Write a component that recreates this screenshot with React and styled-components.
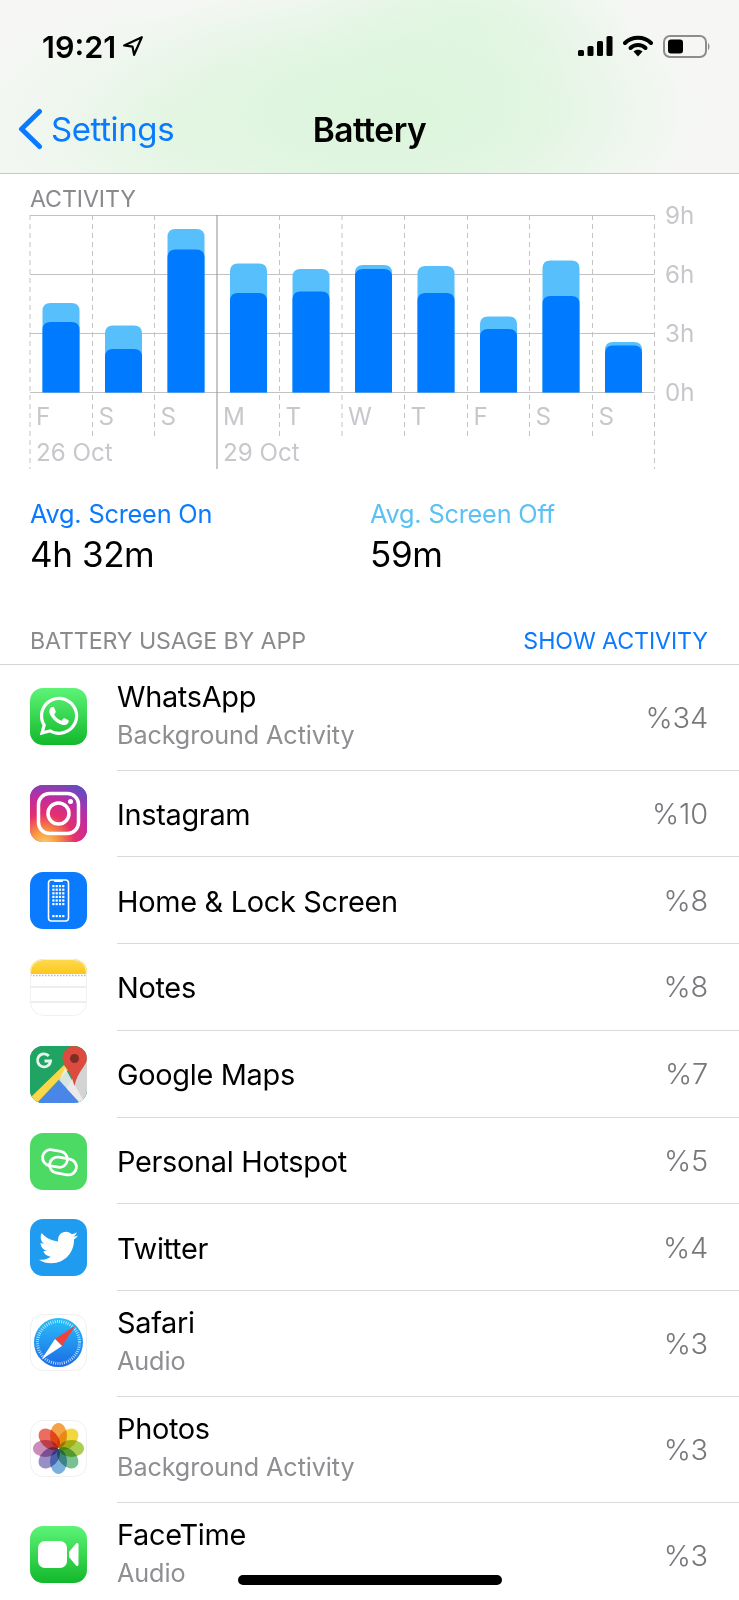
import React from "react";
import styled, { createGlobalStyle } from "styled-components";
import { FaWhatsapp, FaTwitter } from "react-icons/fa";

const Global = createGlobalStyle`
  html, body { margin: 0; padding: 0; background: #fff; }
  body { font-family: Inter, "Liberation Sans", sans-serif; -webkit-font-smoothing: antialiased; }
`;

const Page = styled.div`
  position: relative;
  width: 739px;
  height: 1600px;
  overflow: hidden;
  background: #fff;
  color: #000;
`;

const Header = styled.header`
  box-sizing: border-box;
  height: 174px;
  border-bottom: 1px solid #c9c9c9;
  background:
    radial-gradient(ellipse 300px 150px at 400px 110px, #dcf5dc 0%, rgba(222,245,222,0.85) 45%, rgba(240,248,240,0) 100%),
    radial-gradient(ellipse 220px 130px at 180px 130px, #e4f6e3 0%, rgba(230,246,230,0) 100%),
    radial-gradient(ellipse 160px 80px at 470px 20px, #e3f6e3 0%, rgba(230,246,230,0) 100%),
    #f6f7f5;
  display: flex;
  flex-direction: column;
`;

const StatusBar = styled.div`
  height: 92px;
  box-sizing: border-box;
  padding: 30px 28px 0 42px;
  display: flex;
  justify-content: space-between;
  align-items: flex-start;
`;

const TimeGroup = styled.div`
  display: flex;
  align-items: center;
  gap: 6px;
  height: 32px;
`;

const Time = styled.span`
  font-size: 30.5px;
  font-weight: 600;
  letter-spacing: 0;
`;

const StatusIcons = styled.div`
  display: flex;
  align-items: center;
  height: 32px;
  gap: 10px;
`;

const NavBar = styled.nav`
  position: relative;
  flex: 1;
  display: flex;
  align-items: center;
  justify-content: center;
  padding-bottom: 6px;
`;

const Back = styled.div`
  position: absolute;
  left: 17px;
  top: 16px;
  display: flex;
  align-items: center;
  gap: 8px;
  color: #0a7aff;
  font-size: 33px;
  letter-spacing: -0.4px;
`;

const Title = styled.div`
  font-size: 33.5px;
  font-weight: 600;
  letter-spacing: -0.5px;
`;

const SectionLabel = styled.div`
  font-size: 23.2px;
  line-height: 26px;
  color: #8a8a8e;
  letter-spacing: -0.1px;
`;

const ActivityHead = styled(SectionLabel)`
  padding: 12px 0 0 30px;
  height: 22px;
`;

const ChartSvg = styled.svg`
  display: block;
  width: 739px;
  height: 268px;
  overflow: visible;
`;

const ChartText = styled.text`
  font-family: Inter, "Liberation Sans", sans-serif;
  font-size: 24.2px;
  fill: #c7c7cc;
`;

const Stats = styled.div`
  display: grid;
  grid-template-columns: 340px 1fr;
  padding: 22px 0 0 30px;
  height: 130px;
  box-sizing: content-box;
`;

const StatLabel = styled.div`
  font-size: 25.3px;
  line-height: 32px;
  color: ${(p) => p.$color};
  letter-spacing: -0.2px;
`;

const StatValue = styled.div`
  font-size: 35px;
  line-height: 48px;
  letter-spacing: -0.4px;
`;

const UsageHead = styled.div`
  box-sizing: border-box;
  height: 36.5px;
  padding: 0 31px 0 30px;
  display: flex;
  justify-content: space-between;
  align-items: flex-start;
  border-bottom: 1px solid #d4d4d4;
`;

const ShowActivity = styled(SectionLabel)`
  color: #0a7aff;
`;

const Row = styled.div`
  box-sizing: border-box;
  height: ${(p) => p.$h}px;
  padding-left: 30px;
  display: flex;
  align-items: center;
  gap: 30px;
`;

const RowBody = styled.div`
  box-sizing: border-box;
  flex: 1;
  height: 100%;
  display: flex;
  align-items: center;
  justify-content: space-between;
  padding-right: 31px;
  border-bottom: 1px solid #d9d9d9;
`;

const RowText = styled.div`
  padding: ${(p) => (p.$twoLine ? "0 0 3px" : "3px 0 0")};
`;

const RowName = styled.div`
  font-size: 28.9px;
  line-height: 38px;
  letter-spacing: -0.3px;
`;

const RowSub = styled.div`
  font-size: 25.2px;
  line-height: 38px;
  color: #8e8e93;
  letter-spacing: -0.1px;
`;

const Percent = styled.div`
  font-size: 29px;
  font-weight: 300;
  color: #77777c;
  letter-spacing: -0.2px;
`;

const Tile = styled.div`
  box-sizing: border-box;
  flex: none;
  width: 57px;
  height: 57px;
  margin-bottom: ${(p) => (p.$lifted ? 3 : 0)}px;
  border-radius: 13px;
  overflow: hidden;
  display: flex;
  align-items: center;
  justify-content: center;
  color: #fff;
  background: ${(p) => p.$bg};
  border: ${(p) => (p.$outlined ? "1px solid #f0f0f0" : "none")};
`;

const HomeIndicator = styled.div`
  position: absolute;
  left: 238px;
  top: 1575px;
  width: 264px;
  height: 10px;
  border-radius: 5px;
  background: #000;
`;

/* status bar drawings */
const LocationIcon = () => (
  <svg width="22" height="22" viewBox="0 0 20 20">
    <path d="M18 2 L2 9.5 L9.5 10.5 L11 18 Z" fill="none" stroke="#000" strokeWidth="2" strokeLinejoin="round" />
  </svg>
);
const Signal = () => (
  <svg width="35" height="22" viewBox="0 0 35 22">
    <rect x="0" y="15" width="6" height="6" rx="1.5" />
    <rect x="9.5" y="11" width="6" height="10" rx="1.5" />
    <rect x="19" y="6" width="6" height="15" rx="1.5" />
    <rect x="28.5" y="1" width="6" height="20" rx="1.5" />
  </svg>
);
const Wifi = () => (
  <svg width="30" height="22" viewBox="0 0 30 22">
    <path d="M2 8 C9 1 21 1 28 8" fill="none" stroke="#000" strokeWidth="4" strokeLinecap="round" />
    <path d="M7.5 13 C11.5 9 18.500 9 22.500 13" fill="none" stroke="#000" strokeWidth="4" strokeLinecap="round" />
    <path d="M10.500 16.500 C13 14 17 14 19.500 16.500 L15 21.500 Z" />
  </svg>
);
const BatteryIcon = () => (
  <svg width="48" height="23" viewBox="0 0 48 23">
    <rect x="1" y="1" width="42" height="21" rx="6" fill="none" stroke="#8d8d8d" strokeWidth="2" />
    <rect x="5" y="4.500" width="15" height="14" rx="3" fill="#000" />
    <path d="M45 8 C47 9 47 14 45 15 Z" fill="#8d8d8d" />
  </svg>
);
const Chevron = () => (
  <svg width="26" height="42" viewBox="0 0 26 42">
    <path d="M22.500 3.500 L4.500 21 L22.500 38.500" fill="none" stroke="#0a7aff" strokeWidth="5" strokeLinecap="round" strokeLinejoin="round" />
  </svg>
);

/* chart: y coordinates are page y minus 208 */
const DAYS = ["F", "S", "S", "M", "T", "W", "T", "F", "S", "S"];
const BARS = [
  [303, 322], [325.5, 349], [229, 249.5], [263.5, 293], [269, 291.5],
  [265, 269], [266, 293], [316.5, 329], [260.5, 296], [342, 345.5],
];
const VX = [30, 92.5, 154.5, 217, 279.5, 342, 404.5, 467.5, 529.5, 592.5, 654.5];
const OFF = 208;
const BASE = 392.5 - OFF;

const barPath = (x, top) => {
  const t = top - OFF;
  const w = 37;
  const r = 8;
  return `M${x} ${BASE} V${t + r} Q${x} ${t} ${x + r} ${t} H${x + w - r} Q${x + w} ${t} ${x + w} ${t + r} V${BASE} Z`;
};

const Chart = () => (
  <ChartSvg viewBox="0 0 739 268">
    {[215.5, 274.5, 333.5, 392.5].map((y) => (
      <line key={y} x1="30" x2="654.500" y1={y - OFF} y2={y - OFF} stroke="#c2c2c2" strokeWidth="1" />
    ))}
    {VX.map((x, i) =>
      i === 3 ? (
        <line key={x} x1={x} x2={x} y1={215 - OFF} y2={469 - OFF} stroke="#8f8f8f" strokeWidth="1" />
      ) : (
        <line
          key={x}
          x1={x}
          x2={x}
          y1={215 - OFF}
          y2={(i === 0 || i === 10 ? 469 : 437) - OFF}
          stroke="#c4c4c4"
          strokeWidth="1"
          strokeDasharray="5 4"
        />
      )
    )}
    {BARS.map(([light, dark], i) => {
      const x = 42.5 + 62.5 * i;
      return (
        <g key={i}>
          <path d={barPath(x, light)} fill="#57bffb" />
          <path d={barPath(x, dark)} fill="#007aff" />
        </g>
      );
    })}
    {DAYS.map((d, i) => (
      <ChartText key={i} x={VX[i] + 6} y={425 - OFF}>
        {d}
      </ChartText>
    ))}
    <ChartText x="36" y={461 - OFF}>26 Oct</ChartText>
    <ChartText x="223" y={461 - OFF}>29 Oct</ChartText>
    {[["9h", 215], ["6h", 274], ["3h", 333], ["0h", 392]].map(([t, y]) => (
      <ChartText key={t} x="665" y={y - OFF + 9}>
        {t}
      </ChartText>
    ))}
  </ChartSvg>
);

/* app icons */
const InstagramIcon = () => (
  <svg width="57" height="57" viewBox="0 0 57 57">
    <defs>
      <radialGradient id="ig" cx="25%" cy="105%" r="120%">
        <stop offset="0" stopColor="#fdd074" />
        <stop offset="0.2" stopColor="#f99a3c" />
        <stop offset="0.45" stopColor="#e62f6c" />
        <stop offset="0.7" stopColor="#c02ba0" />
        <stop offset="1" stopColor="#5a4fc8" />
      </radialGradient>
    </defs>
    <rect width="57" height="57" fill="url(#ig)" />
    <rect x="8.500" y="8.500" width="40" height="40" rx="11" fill="none" stroke="#fff" strokeWidth="3.500" />
    <circle cx="28.500" cy="28.500" r="10.500" fill="none" stroke="#fff" strokeWidth="3.500" />
    <circle cx="40.500" cy="16.500" r="2.500" fill="#fff" />
  </svg>
);

const HomeLockIcon = () => (
  <svg width="57" height="57" viewBox="0 0 57 57">
    <rect x="18.500" y="8" width="20" height="41" rx="3" fill="none" stroke="#fff" strokeWidth="1.600" />
    <rect x="24" y="8" width="9" height="2" rx="1" fill="#fff" />
    {[0, 1, 2, 3, 4, 5].map((r) =>
      [0, 1, 2, 3].map((c) => (
        <rect key={`${r}${c}`} x={22.300 + c * 3.300} y={13 + r * 3.600} width="2.200" height="2.200" fill="#fff" />
      ))
    )}
    {[0, 1, 2, 3].map((c) => (
      <rect key={c} x={22.300 + c * 3.300} y="43" width="2.200" height="2.200" fill="#fff" />
    ))}
  </svg>
);

const NotesIcon = () => (
  <svg width="57" height="57" viewBox="0 0 57 57">
    <defs>
      <linearGradient id="nt" x1="0" y1="0" x2="0" y2="1">
        <stop offset="0" stopColor="#fedb50" />
        <stop offset="1" stopColor="#fcc71d" />
      </linearGradient>
    </defs>
    <rect width="57" height="57" fill="#fff" />
    <rect width="57" height="15" fill="url(#nt)" />
    <line x1="0" x2="57" y1="16.500" y2="16.500" stroke="#b9b5ad" strokeWidth="1.500" strokeDasharray="1.500 1.500" />
    <line x1="0" x2="57" y1="28" y2="28" stroke="#dcdcdc" />
    <line x1="0" x2="57" y1="43" y2="43" stroke="#dcdcdc" />
    <rect x="0.500" y="0.500" width="56" height="56" rx="13" fill="none" stroke="#f0f0f0" />
  </svg>
);

const MapsIcon = () => (
  <svg width="57" height="57" viewBox="0 0 57 57">
    <rect width="57" height="57" fill="#1fa463" />
    <path d="M57 8 V57 H28 Z" fill="#d4d4d4" />
    <path d="M7 57 L29 34 L50 57 Z" fill="#4a86e8" />
    <path d="M2 50 L34 19 L38 24 L7 57 H2 Z" fill="#fad64a" />
    <path d="M35 22 L55 57 H50 L29 34 Z" fill="#ececec" opacity="0.9" />
    <path d="M44.500 0 C37 0 32.500 6 32.500 12 C32.500 20 41 24 44.500 40 C48 24 57 20 57 12 C57 6 52 0 44.500 0 Z" fill="#dd4b3e" />
    <circle cx="44.500" cy="12.500" r="4.500" fill="#802d25" />
    <path d="M18.800 10 A6.500 6.500 0 1 0 20.500 15 H14.500" fill="none" stroke="#e8f5ec" strokeWidth="2.800" />
  </svg>
);

const HotspotIcon = () => (
  <svg width="57" height="57" viewBox="0 0 57 57">
    <g fill="none" stroke="#fff" strokeWidth="2.800">
      <rect x="12.500" y="17.500" width="25" height="16" rx="8" transform="rotate(10 25 25.500)" />
      <rect x="19.500" y="25" width="27" height="16" rx="8" transform="rotate(10 33 33)" />
    </g>
  </svg>
);

const SafariIcon = () => (
  <svg width="55" height="55" viewBox="0 0 55 55">
    <defs>
      <linearGradient id="sf" x1="0" y1="0" x2="0" y2="1">
        <stop offset="0" stopColor="#2ac0f8" />
        <stop offset="1" stopColor="#1c69e6" />
      </linearGradient>
    </defs>
    <circle cx="27.500" cy="27.500" r="24.500" fill="url(#sf)" />
    <circle cx="27.500" cy="27.500" r="21" fill="none" stroke="#cfeeff" strokeWidth="3" strokeDasharray="0.800 1.400" />
    <path d="M44.500 10.500 L24 24 L31 31 Z" fill="#f2413a" />
    <path d="M10.500 44.500 L31 31 L24 24 Z" fill="#fff" />
  </svg>
);

const PETALS = ["#f39a33", "#f1d32a", "#a2c83e", "#6bb98a", "#6ca8d8", "#8d83c0", "#c67fb4", "#ea5d4e"];
const Petal = styled.ellipse`
  mix-blend-mode: multiply;
`;
const PhotosIcon = () => (
  <svg width="55" height="55" viewBox="0 0 55 55">
    {PETALS.map((c, i) => (
      <Petal
        key={c}
        cx="27.500"
        cy="14.500"
        rx="8.500"
        ry="12.500"
        fill={c}
        opacity="0.9"
        transform={`rotate(${i * 45} 27.500 27.500)`}
      />
    ))}
  </svg>
);

const FaceTimeIcon = () => (
  <svg width="57" height="57" viewBox="0 0 57 57">
    <rect x="8" y="15" width="29" height="27" rx="7" fill="#fff" />
    <path d="M39 26 L46 17.500 C47 16.500 48.500 17 48.500 18.500 V38.500 C48.500 40 47 40.500 46 39.500 L39 31 Z" fill="#fff" />
  </svg>
);

const APPS = [
  { name: "WhatsApp", sub: "Background Activity", pct: "%34", h: 106, bg: "linear-gradient(#5df477,#12b82b)", icon: <FaWhatsapp size={44} /> },
  { name: "Instagram", pct: "%10", h: 86.8, bg: "#c02ba0", icon: <InstagramIcon /> },
  { name: "Home & Lock Screen", pct: "%8", h: 86.8, bg: "#0a7aff", icon: <HomeLockIcon /> },
  { name: "Notes", pct: "%8", h: 86.8, bg: "#fff", icon: <NotesIcon /> },
  { name: "Google Maps", pct: "%7", h: 86.8, bg: "#1fa463", icon: <MapsIcon /> },
  { name: "Personal Hotspot", pct: "%5", h: 86.8, bg: "#4cd964", icon: <HotspotIcon /> },
  { name: "Twitter", pct: "%4", h: 86.8, bg: "#1f9bf0", icon: <FaTwitter size={39} /> },
  { name: "Safari", sub: "Audio", pct: "%3", h: 106, bg: "#fff", outlined: true, icon: <SafariIcon /> },
  { name: "Photos", sub: "Background Activity", pct: "%3", h: 106, bg: "#fff", outlined: true, icon: <PhotosIcon /> },
  { name: "FaceTime", sub: "Audio", pct: "%3", h: 106, bg: "linear-gradient(#5df477,#12b82b)", icon: <FaceTimeIcon /> },
];

export default function App() {
  return (
    <Page>
      <Global />
      <Header>
        <StatusBar>
          <TimeGroup>
            <Time>19:21</Time>
            <LocationIcon />
          </TimeGroup>
          <StatusIcons>
            <Signal />
            <Wifi />
            <BatteryIcon />
          </StatusIcons>
        </StatusBar>
        <NavBar>
          <Back>
            <Chevron />
            Settings
          </Back>
          <Title>Battery</Title>
        </NavBar>
      </Header>
      <ActivityHead>ACTIVITY</ActivityHead>
      <Chart />
      <Stats>
        <div>
          <StatLabel $color="#0a7aff">Avg. Screen On</StatLabel>
          <StatValue>4h 32m</StatValue>
        </div>
        <div>
          <StatLabel $color="#5ac1f5">Avg. Screen Off</StatLabel>
          <StatValue>59m</StatValue>
        </div>
      </Stats>
      <UsageHead>
        <SectionLabel>BATTERY USAGE BY APP</SectionLabel>
        <ShowActivity>SHOW ACTIVITY</ShowActivity>
      </UsageHead>
      {APPS.map((a) => (
        <Row key={a.name} $h={a.h}>
          <Tile $bg={a.bg} $outlined={a.outlined} $lifted={Boolean(a.sub)}>{a.icon}</Tile>
          <RowBody>
            <RowText $twoLine={Boolean(a.sub)}>
              <RowName>{a.name}</RowName>
              {a.sub && <RowSub>{a.sub}</RowSub>}
            </RowText>
            <Percent>{a.pct}</Percent>
          </RowBody>
        </Row>
      ))}
      <HomeIndicator />
    </Page>
  );
}
